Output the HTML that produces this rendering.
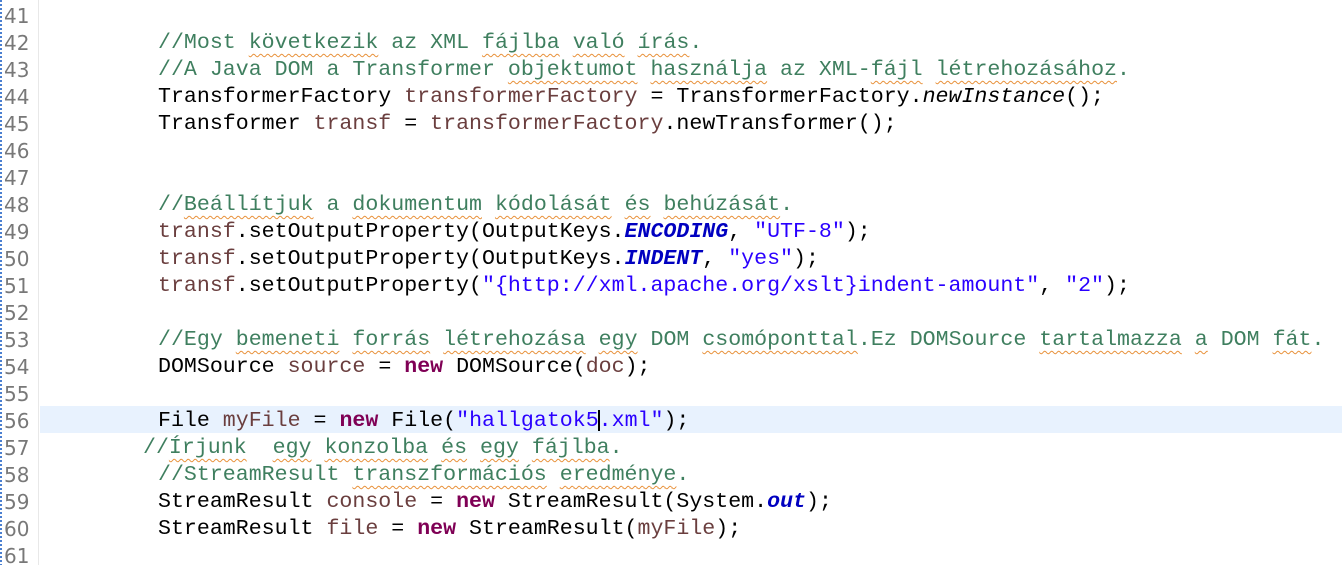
<!DOCTYPE html><html><head><meta charset="utf-8"><style>
body{margin:0;width:1342px;height:565px;background:#fff;overflow:hidden;position:relative;font-family:"Liberation Mono",monospace;font-size:21.6px}
.bl{position:absolute;left:0;top:0;width:2px;height:565px;background:repeating-linear-gradient(#4a7fd0 0 2px,#fff 2px 4px)}
.sep{position:absolute;left:38px;top:0;width:1px;height:565px;background:#e8e8e8}
.hl{position:absolute;left:40px;top:406px;width:1302px;height:27px;background:#e8f2fe}
.l{position:absolute;left:0;height:27px;padding-top:3px;line-height:27px;white-space:pre;color:#000}
.n{position:absolute;left:4px;color:#787878;font-family:"DejaVu Sans","Liberation Sans",sans-serif;font-size:20px}
.c{color:#3f7f5f}.k{color:#7f0055;font-weight:bold}.s{color:#2a00ff}.v{color:#6a3e3e}.f{color:#0000c0;font-weight:bold;font-style:italic}.i{font-style:italic}
.w{text-decoration:underline wavy #e8913a;text-decoration-thickness:1px;text-underline-offset:5px}
.cur{display:inline-block;width:2px;height:21px;background:#000;vertical-align:middle;margin:0 -1px}
</style></head><body>
<div class="bl"></div><div class="sep"></div><div class="hl"></div>
<div class="l" style="top:0"><span class="n">41</span></div>
<div class="l" style="top:27px"><span class="n">42</span><span style="position:absolute;left:158px" class="c">//Most <span class="w">következik</span> az XML <span class="w">fájlba</span> <span class="w">való</span> <span class="w">írás</span>.</span></div>
<div class="l" style="top:54px"><span class="n">43</span><span style="position:absolute;left:158px" class="c">//A Java DOM a Transformer <span class="w">objektumot</span> <span class="w">használja</span> az XML-<span class="w">fájl</span> <span class="w">létrehozásához</span>.</span></div>
<div class="l" style="top:81px"><span class="n">44</span><span style="position:absolute;left:158px">TransformerFactory <span class="v">transformerFactory</span> = TransformerFactory.<span class="i">newInstance</span>();</span></div>
<div class="l" style="top:108px"><span class="n">45</span><span style="position:absolute;left:158px">Transformer <span class="v">transf</span> = <span class="v">transformerFactory</span>.newTransformer();</span></div>
<div class="l" style="top:135px"><span class="n">46</span></div>
<div class="l" style="top:162px"><span class="n">47</span></div>
<div class="l" style="top:189px"><span class="n">48</span><span style="position:absolute;left:158px" class="c">//<span class="w">Beállítjuk</span> a <span class="w">dokumentum</span> <span class="w">kódolását</span> <span class="w">és</span> <span class="w">behúzását</span>.</span></div>
<div class="l" style="top:216px"><span class="n">49</span><span style="position:absolute;left:158px"><span class="v">transf</span>.setOutputProperty(OutputKeys.<span class="f">ENCODING</span>, <span class="s">"UTF-8"</span>);</span></div>
<div class="l" style="top:243px"><span class="n">50</span><span style="position:absolute;left:158px"><span class="v">transf</span>.setOutputProperty(OutputKeys.<span class="f">INDENT</span>, <span class="s">"yes"</span>);</span></div>
<div class="l" style="top:270px"><span class="n">51</span><span style="position:absolute;left:158px"><span class="v">transf</span>.setOutputProperty(<span class="s">"{http://xml.apache.org/xslt}indent-amount"</span>, <span class="s">"2"</span>);</span></div>
<div class="l" style="top:297px"><span class="n">52</span></div>
<div class="l" style="top:324px"><span class="n">53</span><span style="position:absolute;left:158px" class="c">//Egy <span class="w">bemeneti</span> <span class="w">forrás</span> <span class="w">létrehozása</span> <span class="w">egy</span> DOM <span class="w">csomóponttal</span>.Ez DOMSource <span class="w">tartalmazza</span> <span class="w">a</span> DOM <span class="w">fát</span>.</span></div>
<div class="l" style="top:351px"><span class="n">54</span><span style="position:absolute;left:158px">DOMSource <span class="v">source</span> = <span class="k">new</span> DOMSource(<span class="v">doc</span>);</span></div>
<div class="l" style="top:378px"><span class="n">55</span></div>
<div class="l" style="top:405px"><span class="n">56</span><span style="position:absolute;left:158px">File <span class="v">myFile</span> = <span class="k">new</span> File(<span class="s">"hallgatok5<span class="cur"></span>.xml"</span>);</span></div>
<div class="l" style="top:432px"><span class="n">57</span><span style="position:absolute;left:143px" class="c">//<span class="w">Írjunk</span>  <span class="w">egy</span> <span class="w">konzolba</span> <span class="w">és</span> <span class="w">egy</span> <span class="w">fájlba</span>.</span></div>
<div class="l" style="top:459px"><span class="n">58</span><span style="position:absolute;left:158px" class="c">//StreamResult <span class="w">transzformációs</span> <span class="w">eredménye</span>.</span></div>
<div class="l" style="top:486px"><span class="n">59</span><span style="position:absolute;left:158px">StreamResult <span class="v">console</span> = <span class="k">new</span> StreamResult(System.<span class="f">out</span>);</span></div>
<div class="l" style="top:513px"><span class="n">60</span><span style="position:absolute;left:158px">StreamResult <span class="v">file</span> = <span class="k">new</span> StreamResult(<span class="v">myFile</span>);</span></div>
<div class="l" style="top:540px"><span class="n">61</span></div>
</body></html>
